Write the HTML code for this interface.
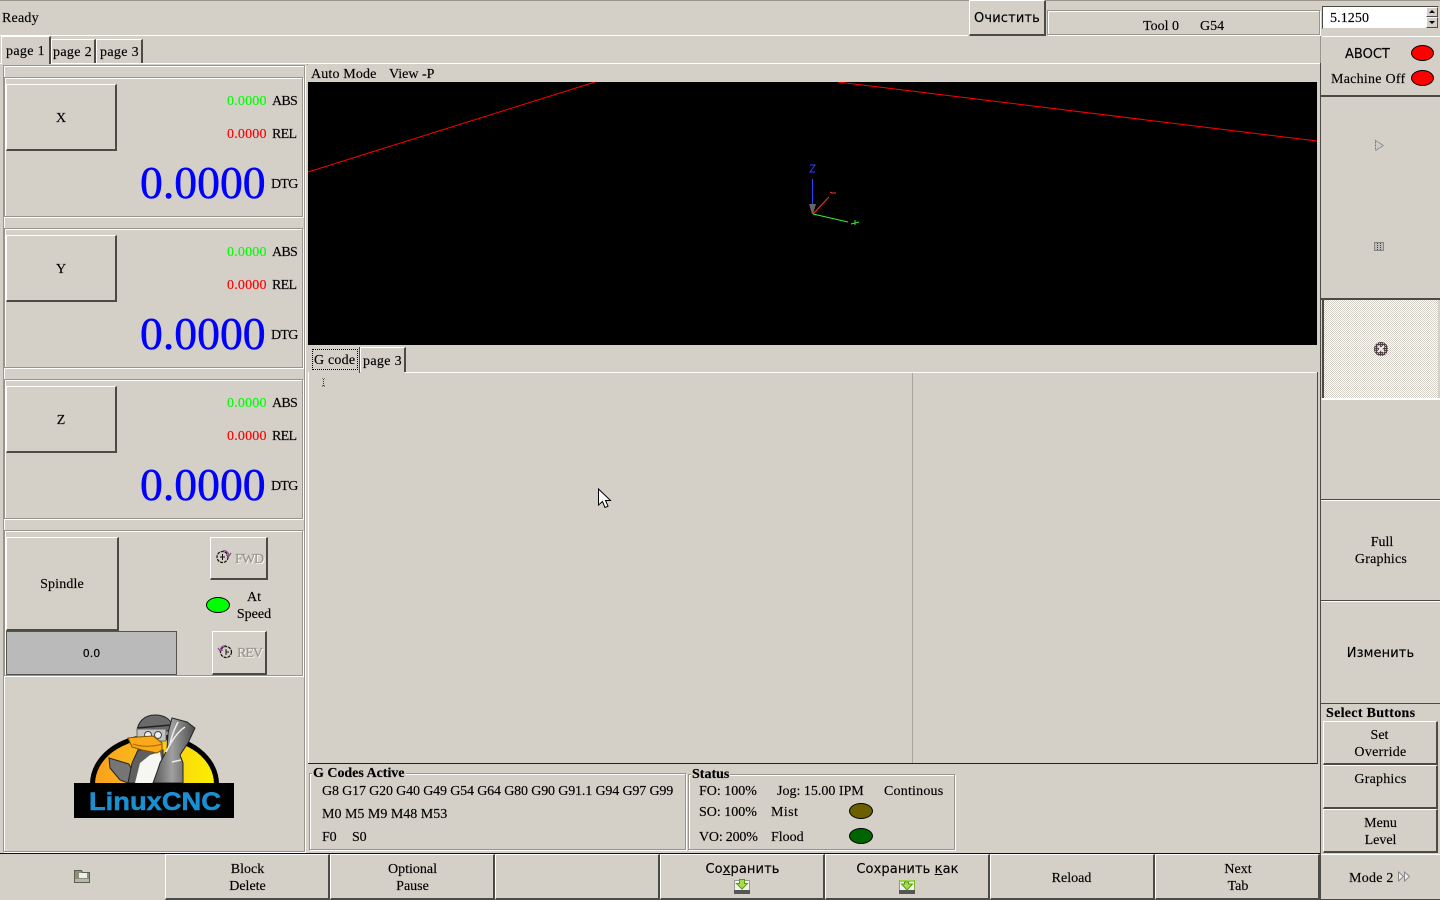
<!DOCTYPE html>
<html><head><meta charset="utf-8"><title>LinuxCNC</title>
<style>
html,body{margin:0;padding:0;width:1440px;height:900px;overflow:hidden;background:#d4d0c8}
body{position:relative;font:14px/16px "Liberation Serif",serif;color:#000;-webkit-text-stroke:.15px}
div,svg{position:absolute;box-sizing:border-box}
.t{white-space:nowrap;height:16px}
.c{text-align:center;line-height:17px}
.s{font-family:"DejaVu Sans",sans-serif;font-size:13px}
.b{border:1px solid;border-color:#fff #4c4a45 #4c4a45 #fff;border-width:1px 2px 2px 1px}
.e{border:1px solid #9a958c;box-shadow:inset 1px 1px 0 #fff,1px 1px 0 #fff}
.big{font-size:45.7px;line-height:50px;color:#00f;white-space:nowrap;-webkit-text-stroke:.5px #00f}
.g{color:#0f0;letter-spacing:.2px}.r{color:#f00;letter-spacing:.2px}
.l{letter-spacing:-.7px}
.p{letter-spacing:.35px}
.d{color:#9c988f;text-shadow:1px 1px 0 #fff;white-space:nowrap;letter-spacing:-1px}
.led{border:1px solid #000;border-radius:50%}
.h{height:1px}.v{width:1px}
</style></head><body>

<!-- top bar -->
<div style="left:0;top:0;width:1440px;height:1px;background:#9a958c"></div>
<div class="h" style="left:0;top:35px;width:968px;background:#fff"></div>
<div class="t" style="left:2px;top:11px;letter-spacing:.2px">Ready</div>
<div class="b" style="left:969px;top:0;width:77px;height:36px"></div>
<div class="t s" style="left:974px;top:11px;letter-spacing:.15px">Очистить</div>
<div class="e" style="left:1047px;top:10px;width:273px;height:25px"></div>
<div class="t" style="left:1143px;top:19px">Tool 0</div>
<div class="t" style="left:1200px;top:19px">G54</div>

<!-- spinbox -->
<div style="left:1322px;top:6px;width:117px;height:23px;background:#fff;border:1px solid;border-color:#4c4a45 #d4d0c8 #d4d0c8 #4c4a45"></div>
<div class="t" style="left:1330px;top:11px;letter-spacing:.1px">5.1250</div>
<div class="b" style="left:1426px;top:7px;width:12px;height:10px;background:#d4d0c8;border-width:1px"></div>
<div class="b" style="left:1426px;top:17px;width:12px;height:11px;background:#d4d0c8;border-width:1px"></div>
<svg style="left:1426px;top:7px" width="12" height="21"><path d="M3 6l3-3 3 3zM3 14l3 3 3-3z" fill="#000"/></svg>

<!-- notebook tabs -->
<div class="h" style="left:0;top:63px;width:1321px;background:#fff"></div>
<div style="left:1px;top:36px;width:50px;height:28px;background:#d4d0c8;border-left:1px solid #fff;border-top:1px solid #fff;border-right:2px solid #4c4a45"></div>
<div style="left:51px;top:39px;width:45px;height:24px;border-left:1px solid #fff;border-top:1px solid #fff;border-right:2px solid #4c4a45"></div>
<div style="left:96px;top:39px;width:47px;height:24px;border-left:1px solid #fff;border-top:1px solid #fff;border-right:2px solid #4c4a45"></div>
<div class="t p" style="left:6px;top:44px">page 1</div>
<div class="t p" style="left:53px;top:45px">page 2</div>
<div class="t p" style="left:100px;top:45px">page 3</div>

<!-- left panel -->
<div class="e" style="left:3px;top:65px;width:302px;height:787px"></div>

<div class="e" style="left:4px;top:77px;width:299px;height:140px"></div>
<div class="b" style="left:6px;top:84px;width:111px;height:67px"></div>
<div class="t c" style="left:6px;top:110px;width:110px">X</div>
<div class="t g" style="left:227px;top:94px">0.0000</div><div class="t l" style="left:272px;top:94px">ABS</div>
<div class="t r" style="left:227px;top:127px">0.0000</div><div class="t l" style="left:272px;top:127px">REL</div>
<div class="big" style="left:140px;top:158px">0.0000</div><div class="t l" style="left:271px;top:177px">DTG</div>

<div class="e" style="left:4px;top:228px;width:299px;height:140px"></div>
<div class="b" style="left:6px;top:235px;width:111px;height:67px"></div>
<div class="t c" style="left:6px;top:261px;width:110px">Y</div>
<div class="t g" style="left:227px;top:245px">0.0000</div><div class="t l" style="left:272px;top:245px">ABS</div>
<div class="t r" style="left:227px;top:278px">0.0000</div><div class="t l" style="left:272px;top:278px">REL</div>
<div class="big" style="left:140px;top:309px">0.0000</div><div class="t l" style="left:271px;top:328px">DTG</div>

<div class="e" style="left:4px;top:379px;width:299px;height:140px"></div>
<div class="b" style="left:6px;top:386px;width:111px;height:67px"></div>
<div class="t c" style="left:6px;top:412px;width:110px">Z</div>
<div class="t g" style="left:227px;top:396px">0.0000</div><div class="t l" style="left:272px;top:396px">ABS</div>
<div class="t r" style="left:227px;top:429px">0.0000</div><div class="t l" style="left:272px;top:429px">REL</div>
<div class="big" style="left:140px;top:460px">0.0000</div><div class="t l" style="left:271px;top:479px">DTG</div>

<!-- spindle -->
<div class="e" style="left:4px;top:530px;width:299px;height:146px"></div>
<div class="b" style="left:6px;top:537px;width:113px;height:94px"></div>
<div class="t c" style="left:6px;top:576px;width:112px;letter-spacing:.15px">Spindle</div>
<div style="left:6px;top:631px;width:171px;height:44px;background:#bababa;border:1px solid #55534e"></div>
<div class="t c" style="left:6px;top:646px;width:171px;font:11px/16px 'DejaVu Sans',sans-serif">0.0</div>
<div class="b" style="left:210px;top:537px;width:58px;height:43px"></div>
<svg style="left:215px;top:549px" width="18" height="15" fill="none"><circle cx="7.500" cy="8" r="5.500" stroke="#111" stroke-width="1.200" stroke-dasharray="3 1"/><path d="M7.500 5v6M5 8h5" stroke="#111"/><path d="M8 1.500c3 0 5 1.500 6 4.500M16 4l-2 3-3-1" stroke="#905090" stroke-width="1.300"/></svg>
<div class="d" style="left:235px;top:552px;-webkit-text-stroke:.3px #9c988f">FWD</div>
<div class="led" style="left:206px;top:597px;width:24px;height:16px;background:#0f0"></div>
<div class="t c" style="left:234px;top:589px;width:40px">At<br>Speed</div>
<div class="b" style="left:212px;top:631px;width:55px;height:44px"></div>
<svg style="left:217px;top:644px" width="18" height="15" fill="none"><circle cx="9" cy="8" r="5.500" stroke="#111" stroke-width="1.200" stroke-dasharray="3 1"/><path d="M9 5v6M9 8h3" stroke="#111"/><path d="M9 1.500c-3 0-5 1.500-6 4.500M1 4l2 3 3-1" stroke="#905090" stroke-width="1.300"/></svg>
<div class="d" style="left:237px;top:646px;-webkit-text-stroke:.3px #9c988f">REV</div>

<!-- logo -->
<svg style="left:70px;top:710px;-webkit-text-stroke:0" width="170" height="112" viewBox="70 710 170 112">
<defs><linearGradient id="lg" x1="0" x2="1"><stop offset="0" stop-color="#f9a01c"/><stop offset=".5" stop-color="#fbc41a"/><stop offset="1" stop-color="#fbf000"/></linearGradient>
<linearGradient id="mill" x1="0" x2="1"><stop offset="0" stop-color="#555"/><stop offset=".45" stop-color="#a0a0a0"/><stop offset="1" stop-color="#4a4a4a"/></linearGradient></defs>
<path d="M90 784a64.500 50 0 0 1 129 0z" fill="#000"/>
<path d="M95 784a59.500 45 0 0 1 119 0z" fill="url(#lg)"/>
<path d="M109 758L129 764 132 770 128 783 120 780 110 768z" fill="#757575" stroke="#222"/>
<path d="M128 783L132 763 138 750H163V783z" fill="#5f5f5f" stroke="#222"/>
<path d="M135 783L140 763 150 755 160 752 162 763 157 783z" fill="#f6f6f2"/>
<path d="M137 731C138 722 144 715 155 715 164 715 171 719 172 726L168 731z" fill="#6a6a6a" stroke="#222"/>
<path d="M137 728L171 725" stroke="#222" stroke-width="1.500"/>
<path d="M137 729H166V741H137z" fill="#c4c4c4" stroke="#666"/>
<circle cx="148" cy="735" r="3.500" fill="#eee" stroke="#444"/><circle cx="158" cy="735" r="3.500" fill="#eee" stroke="#444"/>
<path d="M128 738L138 737 153 736 162 743 162 750 157 753 142 750 132 747z" fill="#fba91a" stroke="#7a5400"/>
<path d="M133 744c8 3 20 3 29 0" stroke="#a06a00" fill="none"/>
<path d="M172 718L187 722 195 728 188 743 180 755 183 763V783H153L157 772 160 763 167 750 168 733z" fill="url(#mill)" stroke="#222"/>
<path d="M185 727c-8 5-14 15-19 25M178 722c-3 6-6 12-8 22M172 762l9-2" stroke="#ededed" stroke-width="1.500" fill="none"/>
<rect x="74" y="783" width="160" height="35" fill="#000"/>
<text x="89" y="810" font-family="Liberation Sans" font-weight="700" font-size="25" fill="#1a90d2" stroke="#1a90d2" stroke-width=".5" textLength="132" lengthAdjust="spacingAndGlyphs">LinuxCNC</text>
</svg>

<!-- preview -->
<div class="t" style="left:311px;top:67px;letter-spacing:.15px">Auto Mode</div>
<div class="t" style="left:389px;top:67px">View -P</div>
<div class="h" style="left:307px;top:64px;width:1px;background:#9a958c"></div>
<div style="left:308px;top:82px;width:1009px;height:263px;background:#000"></div>
<svg style="left:308px;top:82px" width="1009" height="263" viewBox="308 82 1009 263" fill="none">
<path d="M308 172L595 82M838 82L1317 141" stroke="#f00"/>
<path d="M812.500 179V205" stroke="#3040ff"/>
<path d="M809 204h7l-3 10h-1z" fill="#666"/>
<path d="M813 214L829 197" stroke="#ff3030"/>
<path d="M813 214L848 222" stroke="#30f030"/>
<path d="M810 165h5l-5 7h5" stroke="#3040ff"/>
<path d="M830 192l2 1h4" stroke="#ff3030"/>
<path d="M851 224l8-2M855 220v5" stroke="#30f030"/>
</svg>
<div class="v" style="left:1317px;top:372px;height:392px;background:#4c4a45"></div>

<!-- gcode tabs -->
<div class="h" style="left:405px;top:372px;width:912px;background:#fff"></div>
<div class="t" style="left:314px;top:353px;letter-spacing:.2px">G code</div>
<div style="left:312px;top:349px;width:46px;height:21px;border:1px dotted #000"></div>
<div class="v" style="left:359px;top:347px;height:26px;background:#4c4a45"></div>
<div style="left:360px;top:347px;width:46px;height:25px;border-left:1px solid #fff;border-top:1px solid #fff;border-right:2px solid #4c4a45"></div>
<div class="t p" style="left:363px;top:354px">page 3</div>
<div class="v" style="left:308px;top:372px;height:392px;background:#fff"></div>
<div class="h" style="left:308px;top:763px;width:1009px;background:#222"></div>
<div class="v" style="left:912px;top:373px;height:390px;background:#aaa69e"></div>
<svg style="left:321px;top:378px" width="6" height="9"><path d="M1 0h3M2.500 1v7M1 8h3" stroke="#333" stroke-dasharray="1 1"/></svg>
<svg style="left:597px;top:488px" width="15" height="22"><path d="M1.500 1v16l4-3.500 2.500 6 3-1.300-2.500-5.700h5z" fill="#fff" stroke="#000"/></svg>

<!-- g codes -->
<div class="e" style="left:309px;top:773px;width:377px;height:77px"></div>
<div class="t" style="left:312px;top:769px;padding:0 1px;background:#d4d0c8;font-weight:700;height:12px;line-height:10px;letter-spacing:-.02px">G Codes Active</div>
<div class="t" style="left:322px;top:784px;letter-spacing:-.15px">G8 G17 G20 G40 G49 G54 G64 G80 G90 G91.1 G94 G97 G99</div>
<div class="t" style="left:322px;top:807px">M0 M5 M9 M48 M53</div>
<div class="t" style="left:322px;top:830px;letter-spacing:-.2px">F0</div>
<div class="t" style="left:352px;top:830px;letter-spacing:-.2px">S0</div>

<div class="e" style="left:688px;top:774px;width:267px;height:76px"></div>
<div class="t" style="left:691px;top:770px;padding:0 1px;background:#d4d0c8;font-weight:700;height:12px;line-height:10px">Status</div>
<div class="t" style="left:699px;top:784px">FO: 100%</div>
<div class="t" style="left:777px;top:784px">Jog: 15.00 IPM</div>
<div class="t" style="left:884px;top:784px;letter-spacing:.2px">Continous</div>
<div class="t" style="left:699px;top:805px">SO: 100%</div>
<div class="t" style="left:771px;top:805px;letter-spacing:.4px">Mist</div>
<div class="led" style="left:849px;top:803px;width:24px;height:16px;background:#6b5f00"></div>
<div class="t" style="left:699px;top:830px;letter-spacing:-.2px">VO: 200%</div>
<div class="t" style="left:771px;top:830px">Flood</div>
<div class="led" style="left:849px;top:828px;width:24px;height:16px;background:#006400"></div>

<!-- bottom buttons -->
<div style="left:0;top:853px;width:1320px;height:1px;background:#111"></div>
<svg style="left:74px;top:869px" width="16" height="15"><path d="M.5 1.500h7l1 2h7v10H.5z" fill="#8d8f7c" stroke="#5d5f50"/><rect x="5" y="4" width="8" height="5" fill="#eee"/><path d="M1 10h14v3H1z" fill="#b6b8a4"/></svg>
<div class="b" style="left:165px;top:854px;width:165px;height:46px"></div>
<div class="t c" style="left:165px;top:861px;width:165px">Block<br>Delete</div>
<div class="b" style="left:330px;top:854px;width:165px;height:46px"></div>
<div class="t c" style="left:330px;top:861px;width:165px">Optional<br>Pause</div>
<div class="b" style="left:495px;top:854px;width:165px;height:46px"></div>
<div class="b" style="left:660px;top:854px;width:165px;height:46px"></div>
<div class="t c s" style="left:660px;top:861px;width:165px;letter-spacing:.1px">Со<u>х</u>ранить</div>
<svg style="left:734px;top:879px" width="16" height="16"><rect x=".5" y="1.500" width="15" height="13" fill="#f2f2ee" stroke="#999"/><rect x="0" y="11" width="16" height="4" fill="#555"/><path d="M5.500 .5h5v4h3L8 10 2.500 4.500h3z" fill="#a6dc50" stroke="#5a9a10"/></svg>
<div class="b" style="left:825px;top:854px;width:165px;height:46px"></div>
<div class="t c s" style="left:825px;top:861px;width:165px;letter-spacing:.1px">Сохранить <u>к</u>ак</div>
<svg style="left:899px;top:879px" width="16" height="16"><rect x=".5" y="1.500" width="15" height="13" fill="#f2f2ee" stroke="#7fb52e"/><rect x="0" y="11" width="16" height="4" fill="#555"/><path d="M1 1h14v2H1z" fill="#9cd448"/><path d="M5.500 3h4v2h4L8 11 2.500 5h3z" fill="#a6dc50" stroke="#5a9a10"/></svg>
<div class="b" style="left:990px;top:854px;width:165px;height:46px"></div>
<div class="t c" style="left:989px;top:870px;width:165px">Reload</div>
<div class="b" style="left:1155px;top:854px;width:165px;height:46px"></div>
<div class="t c" style="left:1155px;top:861px;width:166px">Next<br>Tab</div>

<!-- right panel -->
<div class="v" style="left:1320px;top:63px;height:837px;background:#4c4a45"></div>
<div class="v" style="left:1320px;top:36px;height:27px;background:#9a958c"></div>
<div class="h" style="left:1322px;top:36px;width:118px;background:#fff"></div>
<div style="left:1321px;top:95px;width:119px;height:2px;background:#4c4a45"></div>
<div class="t s" style="left:1345px;top:47px">ABOCT</div>
<div class="led" style="left:1411px;top:45px;width:23px;height:16px;background:#f00"></div>
<div class="t" style="left:1331px;top:72px;letter-spacing:.25px">Machine Off</div>
<div class="led" style="left:1411px;top:70px;width:23px;height:16px;background:#f00"></div>
<svg style="left:1374px;top:139px" width="11" height="13"><path d="M1.500 1.500v10l8-5z" fill="#ccc" stroke="#777" stroke-dasharray="1 .5"/></svg>
<svg style="left:1374px;top:242px" width="11" height="11"><rect x=".5" y=".5" width="9" height="8" fill="#bbb" stroke="#444" stroke-dasharray="1 1"/><path d="M3.500 1v7M6.500 1v7" stroke="#444" stroke-dasharray="1 1"/></svg>
<div style="left:1321px;top:298px;width:119px;height:2px;background:#4c4a45"></div>
<div style="left:1322px;top:300px;width:116px;height:98px;border-left:2px solid #4c4a45;background:repeating-conic-gradient(#fff 0 25%,#d4d0c8 0 50%) 0 0/2px 2px"></div>
<svg style="left:1373px;top:341px" width="16" height="16"><defs><pattern id="ck" width="2" height="2" patternUnits="userSpaceOnUse"><rect width="2" height="2" fill="#8a2a38"/><rect width="1" height="1" fill="#c0bcb4"/><rect x="1" y="1" width="1" height="1" fill="#4a3a3c"/></pattern></defs><circle cx="8" cy="8" r="7" fill="url(#ck)"/><path d="M5 5l6 6M11 5l-6 6" stroke="#eee" stroke-width="2"/></svg>
<div style="left:1322px;top:398px;width:118px;height:2px;background:#fff"></div>
<div style="left:1321px;top:499px;width:119px;height:1px;background:#4c4a45"></div>
<div class="h" style="left:1321px;top:500px;width:119px;background:#fff"></div>
<div class="t c" style="left:1322px;top:534px;width:118px"><span style="margin-left:2px">Full</span><br><span style="letter-spacing:.2px">Graphics</span></div>
<div class="h" style="left:1321px;top:600px;width:119px;background:#4c4a45"></div>
<div class="h" style="left:1321px;top:601px;width:119px;background:#fff"></div>
<div class="t c s" style="left:1321px;top:645px;width:119px;letter-spacing:.1px">Изменить</div>
<div class="h" style="left:1321px;top:703px;width:119px;background:#4c4a45"></div>
<div class="t" style="left:1326px;top:706px;font-weight:700;letter-spacing:.3px">Select Buttons</div>
<div class="b" style="left:1323px;top:721px;width:115px;height:44px"></div>
<div class="t c" style="left:1323px;top:727px;width:113px"><span>Set</span><br><span style="letter-spacing:.3px;margin-left:2px">Override</span></div>
<div class="b" style="left:1323px;top:765px;width:115px;height:44px"></div>
<div class="t c" style="left:1323px;top:771px;width:115px;letter-spacing:.2px">Graphics</div>
<div class="b" style="left:1323px;top:809px;width:115px;height:44px"></div>
<div class="t c" style="left:1323px;top:815px;width:115px">Menu<br>Level</div>
<div class="h" style="left:1321px;top:854px;width:119px;background:#fff"></div>
<div class="h" style="left:1321px;top:899px;width:119px;background:#4c4a45"></div>
<div class="t" style="left:1349px;top:871px;letter-spacing:.25px">Mode 2</div>
<svg style="left:1397px;top:871px" width="16" height="12"><path d="M1.500 1v9l5-4.500zM7.500 1v9l5-4.500z" fill="#eee" stroke="#888"/></svg>
</body></html>
